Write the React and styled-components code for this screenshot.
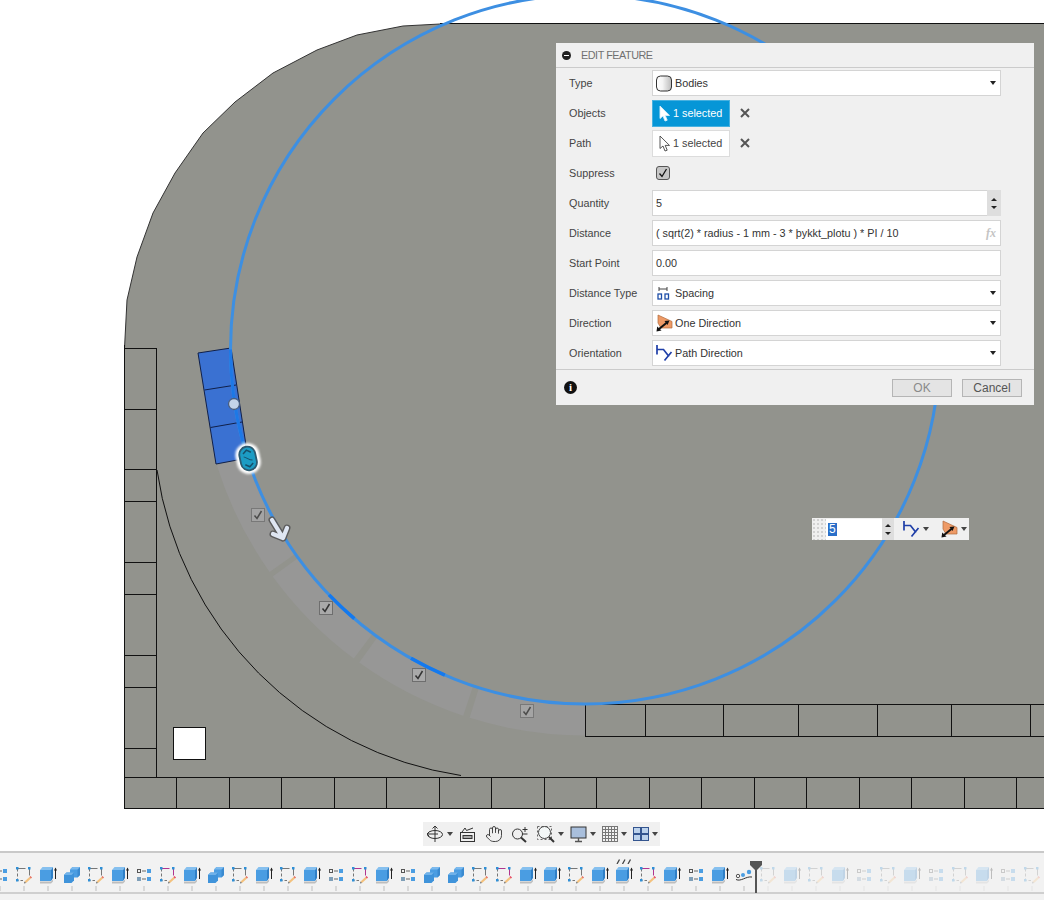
import React from 'react';
import styled, { createGlobalStyle } from 'styled-components';
import { Hand } from 'lucide-react';

const GlobalStyle = createGlobalStyle`
  html, body {
    margin: 0;
    padding: 0;
    background: #fff;
    font-family: "Liberation Sans", Arial, sans-serif;
    overflow: hidden;
  }
`;

const Page = styled.div`
  width: 1044px;
  height: 900px;
  display: flex;
  flex-direction: column;
  overflow: hidden;
`;

const Viewport = styled.div`
  position: relative;
  width: 1044px;
  height: 820px;
  flex: none;
  svg.scene {
    display: block;
  }
`;

// dialog
const Dialog = styled.div`
  position: absolute;
  left: 556px;
  top: 43px;
  width: 478px;
  height: 362px;
  background: #f0f0f0;
  display: flex;
  flex-direction: column;
  color: #444;
  font-size: 10.8px;
`;

const DialogHeader = styled.div`
  height: 25px;
  box-sizing: border-box;
  display: flex;
  align-items: center;
  gap: 10px;
  padding-left: 6px;
  border-bottom: 1px solid #cbcbcb;
  color: #707070;
  letter-spacing: -0.45px;
`;

const MinusDot = styled.span`
  width: 9px;
  height: 9px;
  border-radius: 50%;
  background: #222;
  position: relative;
  &::after {
    content: '';
    position: absolute;
    left: 2px;
    right: 2px;
    top: 4px;
    height: 1px;
    background: #fff;
  }
`;

const Rows = styled.div`
  height: 302px;
  box-sizing: border-box;
  border-bottom: 1px solid #cbcbcb;
`;

const Row = styled.div`
  height: 30px;
  display: grid;
  grid-template-columns: 96px 349px;
  align-items: center;
`;

const Label = styled.div`
  padding-left: 13px;
`;

const Field = styled.div`
  height: 26px;
  box-sizing: border-box;
  background: #fff;
  border: 1px solid #d4d4d4;
  display: flex;
  align-items: center;
  padding-left: ${(p) => (p.$icon ? '2px' : '3px')};
  gap: 2px;
  position: relative;
  color: #333;
`;

const IconSlot = styled.span`
  width: 18px;
  height: 18px;
  flex: none;
  display: flex;
  align-items: center;
  justify-content: center;
`;

const Caret = styled.span`
  position: absolute;
  right: 4px;
  top: 10px;
  width: 0;
  height: 0;
  border-left: 3.5px solid transparent;
  border-right: 3.5px solid transparent;
  border-top: 4px solid #222;
`;

const SelectionRow = styled.div`
  display: flex;
  align-items: center;
  gap: 10px;
`;

const SelectionButton = styled.div`
  width: 78px;
  height: 27px;
  box-sizing: border-box;
  display: flex;
  align-items: center;
  gap: 1px;
  padding-left: 5px;
  background: ${(p) => (p.$active ? '#0696d7' : '#fff')};
  color: ${(p) => (p.$active ? '#fff' : '#444')};
  border: 1px solid ${(p) => (p.$active ? '#48b1e0' : '#dcdcdc')};
`;

const ClearX = styled.svg`
  width: 10px;
  height: 10px;
`;

const CheckBox = styled.div`
  width: 14px;
  height: 14px;
  margin-left: 4px;
  box-sizing: border-box;
  border: 1px solid #555;
  border-radius: 3px;
  background: #c6c6c6;
  display: flex;
  align-items: center;
  justify-content: center;
`;

const Spinner = styled.div`
  position: absolute;
  right: -1px;
  top: -1px;
  bottom: -1px;
  width: 14px;
  background: #dedede;
  display: flex;
  flex-direction: column;
  align-items: center;
  justify-content: center;
  gap: 5px;
`;

const Tri = styled.span`
  width: 0;
  height: 0;
  border-left: 3px solid transparent;
  border-right: 3px solid transparent;
  ${(p) => (p.$up ? 'border-bottom: 3px solid #222;' : 'border-top: 3px solid #222;')}
`;

const Fx = styled.span`
  position: absolute;
  right: 4px;
  top: 5px;
  font-style: italic;
  font-weight: bold;
  font-size: 12px;
  color: #c4c4c4;
  font-family: "Liberation Serif", serif;
`;

const DialogFooter = styled.div`
  flex: 1;
  display: flex;
  align-items: center;
  padding: 0 12px 0 8px;
  gap: 10px;
`;

const InfoDot = styled.span`
  width: 13px;
  height: 13px;
  border-radius: 50%;
  background: #111;
  color: #fff;
  font: bold 11px/13px "Liberation Serif", serif;
  text-align: center;
  margin-right: auto;
`;

const FootButton = styled.div`
  width: 60px;
  height: 18px;
  box-sizing: border-box;
  border: 1px solid #b5b5b5;
  background: #e4e4e4;
  color: ${(p) => (p.$muted ? '#8a8a8a' : '#555')};
  font-size: 12px;
  line-height: 16px;
  text-align: center;
`;

// floating value box beside the path
const FloatBox = styled.div`
  position: absolute;
  left: 812px;
  top: 518px;
  width: 157px;
  height: 22px;
  background: #f0f0f0;
  display: flex;
  align-items: center;
`;

const Grip = styled.span`
  width: 14px;
  height: 22px;
  flex: none;
  background-image: radial-gradient(#d2d2d2 0.8px, transparent 1px);
  background-size: 4px 4px;
`;

const FloatInput = styled.div`
  width: 56px;
  height: 21px;
  padding-left: 2px;
  box-sizing: border-box;
  background: #fff;
  display: flex;
  align-items: center;
  font-size: 12px;
  span {
    background: #2a6fc9;
    color: #fff;
    padding: 0 1px;
    line-height: 13px;
  }
`;

const FloatSpin = styled.div`
  width: 12px;
  height: 22px;
  background: #dedede;
  display: flex;
  flex-direction: column;
  align-items: center;
  justify-content: center;
  gap: 5px;
`;

const FloatMenu = styled.div`
  display: flex;
  align-items: center;
  gap: 3px;
  margin-left: ${(p) => p.$gap}px;
`;

const SmallCaret = styled.span`
  width: 0;
  height: 0;
  border-left: 3px solid transparent;
  border-right: 3px solid transparent;
  border-top: 4px solid #444;
`;

// nav bar
const NavRow = styled.div`
  height: 31px;
  flex: none;
  padding: 2px 0 0 423px;
  box-sizing: border-box;
`;

const NavBar = styled.div`
  width: 237px;
  height: 24px;
  background: #f0f0f0;
  display: flex;
  align-items: center;
  padding-left: 3px;
  box-sizing: border-box;
`;

const NavItem = styled.div`
  display: flex;
  align-items: center;
  gap: 3px;
  margin-right: ${(p) => p.$gap ?? 6}px;
`;

// timeline
const Timeline = styled.div`
  position: relative;
  height: 49px;
  flex: none;
  background: #f2f2f2;
  border-top: 2px solid #c9c9c9;
  box-sizing: border-box;
  overflow: hidden;
`;

const Track = styled.div`
  position: absolute;
  left: 0;
  right: 0;
  top: 39px;
  height: 2px;
  background: #cfcfcf;
`;

const Steps = styled.div`
  display: flex;
  margin-left: -12px;
  padding-top: 13px;
`;

const Step = styled.div`
  width: 24px;
  flex: none;
  display: flex;
  flex-direction: column;
  align-items: center;
  opacity: ${(p) => (p.$ghost ? 0.25 : 1)};
  position: relative;
  &::after {
    content: '';
    width: 2px;
    height: 5px;
    margin-top: 2px;
    background: #d8d8d8;
  }
`;

const Ticks = styled.svg`
  position: absolute;
  top: -7px;
  left: 4px;
`;

const Marker = styled.svg`
  position: absolute;
  left: 749px;
  top: 8px;
`;

const FEATURE_SIZE = 18;

function SketchIcon({ purple }) {
  return (
    <svg width={FEATURE_SIZE} height={FEATURE_SIZE} viewBox="0 0 18 18">
      <path d="M2.5 2.5H14.5V11" fill="none" stroke={purple ? '#b0358f' : '#777'} strokeWidth="1" strokeDasharray="8 3" />
      <path d="M2.5 2.5V14.5H8" fill="none" stroke="#777" strokeWidth="1" strokeDasharray="3 2" />
      <g fill="#2f8fd6">
        <rect x="1" y="1" width="2.5" height="2.5" />
        <rect x="13" y="1" width="2.5" height="2.5" />
        <rect x="1" y="13" width="2.5" height="2.5" />
      </g>
      <path d="M9.5 15.5L14.5 11L16 12.5L11 17Z" fill="#f4c27e" />
      <path d="M14.5 11L15.5 10L17 11.5L16 12.5Z" fill={purple ? '#e8405f' : '#e86a5a'} />
      <path d="M9.5 15.5L9 17.5L11 17Z" fill="#666" />
    </svg>
  );
}

function ExtrudeIcon() {
  return (
    <svg width={FEATURE_SIZE} height={FEATURE_SIZE} viewBox="0 0 18 18">
      <path d="M1 15.5H12L14 13.5V15.5L12 17.5H1Z" fill="#bdbdbd" />
      <path d="M1 4H12V15H1Z" fill="#4a9de2" />
      <path d="M1 4L3.5 1H14L12 4Z" fill="#86c0ef" />
      <path d="M12 4L14 1V12L12 15Z" fill="#2f7fc6" />
      <path d="M16.5 13V2.5" stroke="#222" strokeWidth="1" />
      <path d="M15 4.5L16.5 1.5L18 4.5Z" fill="#222" />
    </svg>
  );
}

function CombineIcon() {
  return (
    <svg width={FEATURE_SIZE} height={FEATURE_SIZE} viewBox="0 0 18 18">
      <path d="M7 3.5L9.5 1H17V9L14.5 11.5H7Z" fill="#4a9de2" />
      <path d="M14.5 3.5L17 1V9L14.5 11.5Z" fill="#3a8ad0" />
      <path d="M7 3.5L9.5 1H17L14.5 3.5Z" fill="#7cbaee" />
      <path d="M1 9L3.5 6.5H11V14.5L8.5 17H1Z" fill="#3f93da" />
      <path d="M1 9L3.5 6.5H11L8.5 9Z" fill="#6fb2ea" />
    </svg>
  );
}

function PatternIcon() {
  return (
    <svg width={FEATURE_SIZE} height={FEATURE_SIZE} viewBox="0 0 18 18">
      <rect x="2.5" y="3.5" width="3" height="3" fill="none" stroke="#555" />
      <rect x="12" y="3" width="4" height="4" fill="#4a9de2" />
      <rect x="2" y="11" width="4" height="4" fill="#7f9fb8" />
      <rect x="12" y="11" width="4" height="4" fill="#4a9de2" />
      <path d="M7 5H11M7 13H11" stroke="#666" />
    </svg>
  );
}

function PathPatternIcon() {
  return (
    <svg width={FEATURE_SIZE} height={FEATURE_SIZE} viewBox="0 0 18 18">
      <path d="M1 13.5C6 16 11 10 17 11" fill="none" stroke="#333" strokeWidth="1" />
      <circle cx="3" cy="10" r="1.7" fill="none" stroke="#555" />
      <circle cx="8" cy="9" r="2" fill="#4a9de2" />
      <circle cx="14" cy="6" r="2.2" fill="#4a9de2" />
    </svg>
  );
}

function BodiesIcon() {
  return (
    <svg width="17" height="17" viewBox="0 0 17 17">
      <defs>
        <linearGradient id="bodyfill" x1="0" x2="1" y1="0" y2="0">
          <stop offset="0" stopColor="#fff" />
          <stop offset="0.4" stopColor="#f4f4f4" />
          <stop offset="1" stopColor="#bbb" />
        </linearGradient>
      </defs>
      <rect x="0.5" y="1" width="15" height="15" rx="4" fill="url(#bodyfill)" stroke="#333" />
    </svg>
  );
}

function CursorIcon({ white }) {
  return (
    <svg width="14" height="17" viewBox="0 0 14 17">
      <path d="M2 1V13.5L5 11L7 16L9.2 15.2L7.2 10.4H11.5Z" fill="#fff" stroke={white ? '#d8eef9' : '#444'} strokeWidth="0.9" />
    </svg>
  );
}

function SpacingIcon() {
  return (
    <svg width="14" height="16" viewBox="0 0 14 16">
      <path d="M2 2V6M10 2V6M2 4H10" stroke="#444" fill="none" />
      <rect x="1" y="9" width="3.5" height="5" fill="none" stroke="#1f4fa8" strokeWidth="1.3" />
      <rect x="8" y="9" width="3.5" height="5" fill="none" stroke="#1f4fa8" strokeWidth="1.3" />
    </svg>
  );
}

function DirectionIcon() {
  return (
    <svg width="17" height="18" viewBox="0 0 17 18">
      <path d="M2 1L16 7.5V14H5L2 9Z" fill="#ee9a66" stroke="#b06a3c" strokeWidth="0.7" />
      <path d="M3 15L11 8.5" stroke="#111" strokeWidth="2" />
      <path d="M0.5 17.5L1.2 12.5L5.5 16.5Z" fill="#111" />
      <path d="M13.5 6.5L8.5 7L11.5 11Z" fill="#111" />
    </svg>
  );
}

function PathDirectionIcon() {
  return (
    <svg width="18" height="18" viewBox="0 0 18 18">
      <path d="M2 1V10.5M2 5.5H8.5L14 12.5M9.5 16.5L16.5 8" fill="none" stroke="#1f3fa8" strokeWidth="1.7" />
    </svg>
  );
}

const features = [
  'p', 's', 'e', 'c', 's', 'e', 'p', 'S', 'e', 'c', 's', 'e', 's', 'e', 'p', 'S', 'e', 'p', 'c', 'c', 's', 'S', 'e', 'e', 's', 'e', 't', 'S', 'e', 'p', 'e', 'a',
  'gs', 'ge', 'gs', 'ge', 'gp', 'gs', 'ge', 'gp', 'gs', 'ge', 'gp', 'gs',
];

function Feature({ kind }) {
  const ghost = kind[0] === 'g';
  const k = ghost ? kind[1] : kind;
  return (
    <Step $ghost={ghost}>
      {k === 't' && (
        <Ticks width="16" height="5" viewBox="0 0 16 5">
          <path d="M1 5L3.5 0.5M6.5 5L9 0.5M12 5L14.5 0.5" stroke="#444" strokeWidth="1.3" />
        </Ticks>
      )}
      {k === 's' && <SketchIcon />}
      {k === 'S' && <SketchIcon purple />}
      {(k === 'e' || k === 't') && <ExtrudeIcon />}
      {k === 'c' && <CombineIcon />}
      {k === 'p' && <PatternIcon />}
      {k === 'a' && <PathPatternIcon />}
    </Step>
  );
}

const CX = 585;
const CY = 349.5;
const R = 354.5;
const ROUT = 386;

const polar = (r, deg) => {
  const a = (deg * Math.PI) / 180;
  return `${(CX + r * Math.cos(a)).toFixed(1)} ${(CY + r * Math.sin(a)).toFixed(1)}`;
};

const ghostPath = (from, to) =>
  `M${polar(R, from)} A${R} ${R} 0 0 0 ${polar(R, to)} L${polar(ROUT, to)} A${ROUT} ${ROUT} 0 0 1 ${polar(ROUT, from)} Z`;

const arcPath = (from, to) => `M${polar(R, from)} A${R} ${R} 0 0 0 ${polar(R, to)}`;

const bottomCells = [124, 176, 229, 281, 334, 386, 439, 491, 544, 596, 649, 701, 754, 806, 859, 911, 964, 1016];
const rightCells = [585, 645, 723, 798, 877, 951, 1030];
const leftCells = [409, 469, 501, 562, 594, 655, 687, 748];

// the rounded corner is a faceted edge in the reference
const corner = 'L127 300 L137 257 L153 213 L175 173 L203 133 L235 102 L273 73 L317 50 L357 35 L403 26 L440 24';

function CanvasCheck({ x, y, faded }) {
  return (
    <g transform={`translate(${x - 7} ${y - 7})`} opacity={faded ? 0.75 : 1}>
      <rect x="0.5" y="0.5" width="13" height="13" fill="#a9a9a9" stroke="#6e6e6e" />
      <path d="M3.5 7.5L6 10.5L10.5 3" fill="none" stroke="#333" strokeWidth="1.5" />
    </g>
  );
}

function Scene() {
  return (
    <svg className="scene" width="1044" height="820" viewBox="0 0 1044 820">
      <defs>
        <filter id="glow" x="-40%" y="-40%" width="180%" height="180%">
          <feGaussianBlur stdDeviation="1.2" />
        </filter>
      </defs>
      <path d={`M124.5 808.5V348 ${corner} H1044V808.5Z`} fill="#92938d" />
      <path d={`M124.5 348 ${corner}`} fill="none" stroke="#333" strokeWidth="1" />
      <path d="M440 23.5H1044" fill="none" stroke="#111" strokeWidth="1" />

      {/* ghost bodies along the path */}
      <g fill="#979796">
        <path d={ghostPath(162.5, 144.8)} />
        <path d={ghostPath(144, 126.8)} />
        <path d={ghostPath(125.8, 108.4)} />
        <path d={ghostPath(107.4, 89.8)} />
      </g>

      {/* edges */}
      <g stroke="#111" strokeWidth="1" fill="none" shapeRendering="crispEdges">
        <path d="M124.5 348.5H156.5V777M124.5 345V808.5H1044M124.5 777.5H1044" />
        <path d="M585.5 704.5H1044M585.5 704.5V736.5H1044" />
        {leftCells.map((y) => (
          <path key={y} d={`M124.5 ${y + 0.5}H156.5`} />
        ))}
        {bottomCells.map((x) => (
          <path key={x} d={`M${x + 0.5} 777V808`} />
        ))}
        {rightCells.map((x) => (
          <path key={x} d={`M${x + 0.5} 704V736`} />
        ))}
        <rect x="173.5" y="727.5" width="32" height="32" fill="#fff" />
      </g>
      <path d="M157 470A361.5 361.5 0 0 0 461 775.5" fill="none" stroke="#111" strokeWidth="1" />

      {/* selected bodies */}
      <path d="M198 353L231 348L248 458L216 464Z" fill="#3a71d2" stroke="#10204a" strokeWidth="1" />
      <path d="M204.5 390L236 385M210.5 427.5L242 422" stroke="#10204a" strokeWidth="1" />

      {/* path */}
      <circle cx={CX} cy={CY} r={R} fill="none" stroke="#3d8fe2" strokeWidth="3" />
      <path d={arcPath(180, 165)} fill="none" stroke="#1d78e6" strokeWidth="3" />
      <path d={arcPath(136.2, 130.6)} fill="none" stroke="#1479ee" strokeWidth="3.5" />
      <path d={arcPath(119.4, 113.3)} fill="none" stroke="#1479ee" strokeWidth="3.5" />

      <CanvasCheck x={258} y={515} faded />
      <CanvasCheck x={326} y={608} />
      <CanvasCheck x={419} y={675} />
      <CanvasCheck x={527} y={711} faded />

      {/* manipulators */}
      <circle cx="234" cy="404" r="5.5" fill="#c3d3ea" stroke="#4a5f80" strokeWidth="1.3" />
      <g transform="rotate(-12 248 458)">
        <rect x="236" y="443" width="24" height="31" rx="12" fill="#fff" filter="url(#glow)" />
        <rect x="240" y="446.5" width="16" height="24" rx="8" fill="#1c9cc4" stroke="#2c5a70" strokeWidth="1.8" />
        <path d="M244 453L248 450L252 453M244 464L248 467L252 464" fill="none" stroke="#16506a" strokeWidth="1.5" />
        <path d="M244 456C248 458 248 460 252 461" fill="none" stroke="#16506a" strokeWidth="1" />
      </g>
      <g fill="none" strokeLinecap="round" strokeLinejoin="round">
        <path d="M272 520L283 538M273 534L283 538L287 528" stroke="#5b5b5b" strokeWidth="7" />
        <path d="M272 520L283 538M273 534L283 538L287 528" stroke="#dfe6f2" strokeWidth="4.2" />
      </g>
    </svg>
  );
}

function OrbitIcon() {
  return (
    <svg width="18" height="18" viewBox="0 0 18 18" fill="none" stroke="#333">
      <path d="M9 1V17M6.5 3.5L9 1L11.5 3.5" />
      <path d="M1 9H12M3.5 6.5L1 9L3.5 11.5" />
      <ellipse cx="9" cy="9.5" rx="7.5" ry="4" />
    </svg>
  );
}

function LookAtIcon() {
  return (
    <svg width="17" height="17" viewBox="0 0 17 17" fill="none" stroke="#333">
      <rect x="1.5" y="6.5" width="14" height="9" />
      <rect x="4" y="9.5" width="9" height="3" fill="#aaa" />
      <path d="M3 6L6 2L7.5 4.5L14 2" />
    </svg>
  );
}

function ZoomPlusIcon() {
  return (
    <svg width="18" height="17" viewBox="0 0 18 17" fill="none" stroke="#333">
      <circle cx="6.5" cy="8" r="5" />
      <path d="M10 11.5L15 16" strokeWidth="2" />
      <path d="M14 1V6M11.5 3.5H16.5M11.5 8H16.5" />
    </svg>
  );
}

function ZoomWindowIcon() {
  return (
    <svg width="18" height="18" viewBox="0 0 18 18" fill="none">
      <rect x="0.5" y="1.5" width="14" height="13" stroke="#666" strokeDasharray="2 2" />
      <circle cx="7.5" cy="7.5" r="6" fill="#f4f8f8" stroke="#444" />
      <path d="M12 12L17 17" stroke="#333" strokeWidth="2" />
    </svg>
  );
}

function DisplayIcon() {
  return (
    <svg width="17" height="17" viewBox="0 0 17 17">
      <rect x="1" y="1" width="15" height="11" fill="#a9bfdc" stroke="#333" />
      <path d="M5 15.5H12M8.5 12V15.5" stroke="#555" strokeWidth="1.4" />
    </svg>
  );
}

function GridIcon() {
  return (
    <svg width="16" height="16" viewBox="0 0 16 16" fill="#f2f2f2" stroke="#777">
      <rect x="0.5" y="0.5" width="15" height="15" />
      <path d="M3.5 0V16M6.5 0V16M9.5 0V16M12.5 0V16M0 3.5H16M0 6.5H16M0 9.5H16M0 12.5H16" />
    </svg>
  );
}

function ViewsIcon() {
  return (
    <svg width="16" height="14" viewBox="0 0 16 14" fill="#bcd2ec" stroke="#34558f">
      <rect x="0.5" y="0.5" width="7" height="6" />
      <rect x="8.5" y="0.5" width="7" height="6" />
      <rect x="0.5" y="7.5" width="7" height="6" />
      <rect x="8.5" y="7.5" width="7" height="6" />
    </svg>
  );
}

function App() {
  return (
    <Page>
      <GlobalStyle />
      <Viewport>
        <Scene />

        <Dialog>
          <DialogHeader>
            <MinusDot />
            EDIT FEATURE
          </DialogHeader>
          <Rows>
            <Row>
              <Label>Type</Label>
              <Field $icon>
                <IconSlot><BodiesIcon /></IconSlot>
                Bodies
                <Caret />
              </Field>
            </Row>
            <Row>
              <Label>Objects</Label>
              <SelectionRow>
                <SelectionButton $active><CursorIcon white />1 selected</SelectionButton>
                <ClearX viewBox="0 0 10 10"><path d="M1 1L9 9M9 1L1 9" stroke="#555" strokeWidth="2" /></ClearX>
              </SelectionRow>
            </Row>
            <Row>
              <Label>Path</Label>
              <SelectionRow>
                <SelectionButton><CursorIcon />1 selected</SelectionButton>
                <ClearX viewBox="0 0 10 10"><path d="M1 1L9 9M9 1L1 9" stroke="#555" strokeWidth="2" /></ClearX>
              </SelectionRow>
            </Row>
            <Row>
              <Label>Suppress</Label>
              <CheckBox>
                <svg width="10" height="10" viewBox="0 0 10 10"><path d="M1.5 5.5L4 8.5L8.5 1" fill="none" stroke="#111" strokeWidth="1.3" /></svg>
              </CheckBox>
            </Row>
            <Row>
              <Label>Quantity</Label>
              <Field>
                5
                <Spinner><Tri $up /><Tri /></Spinner>
              </Field>
            </Row>
            <Row>
              <Label>Distance</Label>
              <Field>
                ( sqrt(2) * radius - 1 mm - 3 * þykkt_plotu ) * PI / 10
                <Fx>fx</Fx>
              </Field>
            </Row>
            <Row>
              <Label>Start Point</Label>
              <Field>0.00</Field>
            </Row>
            <Row>
              <Label>Distance Type</Label>
              <Field $icon>
                <IconSlot><SpacingIcon /></IconSlot>
                Spacing
                <Caret />
              </Field>
            </Row>
            <Row>
              <Label>Direction</Label>
              <Field $icon>
                <IconSlot><DirectionIcon /></IconSlot>
                One Direction
                <Caret />
              </Field>
            </Row>
            <Row>
              <Label>Orientation</Label>
              <Field $icon>
                <IconSlot><PathDirectionIcon /></IconSlot>
                Path Direction
                <Caret />
              </Field>
            </Row>
          </Rows>
          <DialogFooter>
            <InfoDot>i</InfoDot>
            <FootButton $muted>OK</FootButton>
            <FootButton>Cancel</FootButton>
          </DialogFooter>
        </Dialog>

        <FloatBox>
          <Grip />
          <FloatInput><span>5</span></FloatInput>
          <FloatSpin><Tri $up /><Tri /></FloatSpin>
          <FloatMenu $gap={8}><PathDirectionIcon /><SmallCaret /></FloatMenu>
          <FloatMenu $gap={12}><DirectionIcon /><SmallCaret /></FloatMenu>
        </FloatBox>
      </Viewport>

      <NavRow>
        <NavBar>
          <NavItem><OrbitIcon /><SmallCaret /></NavItem>
          <NavItem $gap={9}><LookAtIcon /></NavItem>
          <NavItem $gap={8}><Hand size={18} strokeWidth={1.2} color="#333" /></NavItem>
          <NavItem $gap={8}><ZoomPlusIcon /></NavItem>
          <NavItem><ZoomWindowIcon /><SmallCaret /></NavItem>
          <NavItem><DisplayIcon /><SmallCaret /></NavItem>
          <NavItem><GridIcon /><SmallCaret /></NavItem>
          <NavItem $gap={0}><ViewsIcon /><SmallCaret /></NavItem>
        </NavBar>
      </NavRow>

      <Timeline>
        <Track />
        <Steps>
          {features.map((kind, i) => (
            <Feature key={i} kind={kind} />
          ))}
        </Steps>
        <Marker width="14" height="32" viewBox="0 0 14 32">
          <path d="M1 0H13V4L7 10L1 4Z" fill="#555" />
          <rect x="6" y="8" width="2" height="24" fill="#555" />
        </Marker>
      </Timeline>
    </Page>
  );
}

export default App;
